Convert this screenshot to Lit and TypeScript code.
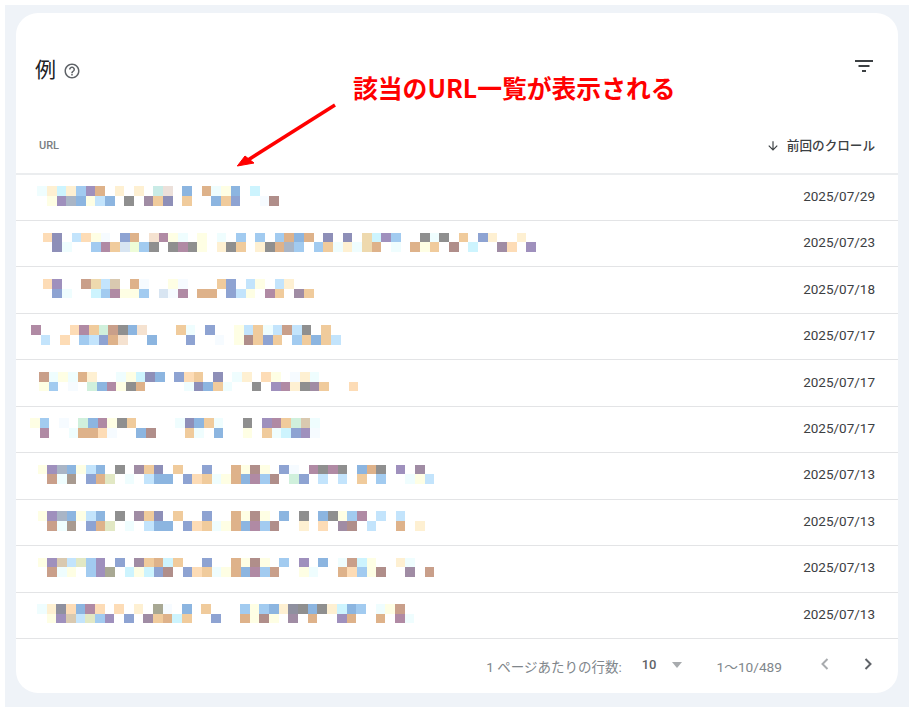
import { LitElement, html, css, svg } from "lit";
import { customElement } from "lit/decorators.js";

const PALETTE: Record<string, string> = {
  c: "#effdfe", C: "#cdf4fe", S: "#c3e4fc", k: "#fef0d2", P: "#fddcb6", p: "#f5e2d0",
  y: "#fefee4", f: "#f6fbff", b: "#a2cbf0", B: "#8cb5e0", n: "#8ea3d2", i: "#8e8fb8",
  v: "#9f90bd", m: "#b08aa4", M: "#a08ca4", r: "#b08e8a", R: "#c99f8a", t: "#deb28a",
  o: "#f0cb9c", g: "#8f8f8f", G: "#8f909f", q: "#a9b5c6", w: "#c9ebe6", x: "#ece0da",
  e: "#d0f0dc", E: "#eefcd8", l: "#e2e8c4", u: "#d9c9b0", h: "#eed9ae", d: "#d8e5f2",
  W: "#a89a90", Z: "#a8a893",
};

interface Row { x: number; top: string; bot: string; date: string }

const ROWS: Row[] = [
  { x: 21.3, date: "2025/07/29", top: "ckCkbvt.k.k.wx.B.tcyB.C", bot: ".yvqBySB.g.Moi.o..Bon..fr" },
  { x: 26.7, date: "2025/07/23", top: "Pi.SPyf.nt.pmyc.y.c.b.b.btBt.i.i.hCvb..gcg.o.nk..k", bot: ".ic..bmodEbg.gmgy.kgo.kgtqb.bockcht.c.tyo.r.C..MP.v" },
  { x: 26.7, date: "2025/07/18", top: "Pv..RhSu.tf..yf...on.Sy.Sk", bot: ".nc..Cbmyyb.dfm.tt.nSy.mo.Mo" },
  { x: 15, date: "2025/07/17", top: "m...PmoeRgBp...oc.n..ySocSRSg.o", bot: ".S.P.bSntp..B...n..f.yrono.boBoS" },
  { x: 23, date: "2025/07/17", top: "Rcyctk..cyCiB.nPo.i.ck.Py.fkc", bot: "yb.f.eBmygt....ciBoc..g.vmkgMo..P" },
  { x: 14, date: "2025/07/17", top: "yb.f.eBmygo....ciBoc..g.vmoeuc", bot: ".m..cttPf..Br...oc.B..y.ocCnvf" },
  { x: 21.7, date: "2025/07/13", top: "yvqBySB.g.Moi.o..n..tyry.nf.mgmg.Btg.v.M", bot: ".RcW.ntl.c.SBB.nPocytBmbr.en.S.S.o.b..cyS" },
  { x: 21.7, date: "2025/07/13", top: "yvqBySB.g.Moi.o..n..tyry.B.g.Bgybm.S.S", bot: ".RcW.ntl.c.SBB.nPocytBmbr..k.P.Mr.S..t.k" },
  { x: 21.7, date: "2025/07/13", top: "yvuSlbv.n.MotCo..n..tyry.b.v.B.cRCy..kc", bot: ".Rcy.bvZ.CyCnr.nPocytBmbR..yc..tPbyr..M.R" },
  { x: 21, date: "2025/07/13", top: "ckGPBmP.P.k.Zf.B.o...bybBkGgBgkCBb.cyR", bot: ".yvuSlbv.n.MotCo..n..tyry.M.t..vt..t.mc" },
];

const line = (s: string) => html`<div class="line">${[...s].map((ch) =>
  html`<span class="cell" style=${PALETTE[ch] ? `background:${PALETTE[ch]}` : ""}></span>`)}</div>`;

@customElement("app-root")
export class AppRoot extends LitElement {
  static styles = css`
    :host {
      display: block;
      width: 915px;
      height: 713px;
      box-sizing: border-box;
      padding: 5px 6px 6px 5px;
      background: #fff;
      font-family: Roboto, "Noto Sans CJK JP", sans-serif;
    }
    .frame {
      height: 100%;
      box-sizing: border-box;
      padding: 8px 11px 14px 11px;
      background: #eff3f8;
    }
    .card {
      position: relative;
      height: 100%;
      background: #fff;
      border-radius: 22px;
      display: flex;
      flex-direction: column;
      overflow: hidden;
    }
    .title-row {
      height: 112px;
      flex: none;
      box-sizing: border-box;
      padding: 41px 25px 0 19px;
      display: flex;
      align-items: flex-start;
      justify-content: space-between;
    }
    .title {
      display: flex;
      align-items: center;
      gap: 7px;
      font: 400 21px/28px "Noto Sans CJK JP", sans-serif;
      color: #202124;
    }
    .help { display: block; width: 18px; height: 18px; margin-top: 5px; }
    .filter { display: block; width: 18px; height: 14px; margin-top: 5px; }
    .head {
      height: 49.6px;
      flex: none;
      box-sizing: border-box;
      padding: 0 23px 6px 23px;
      display: flex;
      align-items: center;
      justify-content: space-between;
      border-bottom: 2px solid #ebedef;
    }
    .head-url { font: 500 11px/16px Roboto, sans-serif; color: #7a7d81; }
    .head-sort {
      display: flex;
      align-items: center;
      gap: 7px;
      font: 500 12.6px/16px Roboto, "Noto Sans CJK JP", sans-serif;
      color: #3c4043;
    }
    .head-sort svg { display: block; width: 14px; height: 14px; }
    .rows { flex: none; }
    .row {
      height: 46.45px;
      box-sizing: border-box;
      border-bottom: 1px solid #e3e4e6;
      padding: 0 23px 3px 0;
      display: flex;
      align-items: center;
      justify-content: space-between;
    }
    .mosaic { filter: blur(0.35px); }
    .line { display: flex; height: 9.7px; }
    .cell { flex: none; width: 9.68px; height: 9.7px; }
    .date { font: 400 13.5px/20px Roboto, sans-serif; color: #3c4043; }
    .foot {
      flex: 1;
      display: flex;
      align-items: center;
      justify-content: flex-end;
      padding: 3px 22px 0 0;
      font: 400 13.5px/18px Roboto, "Noto Sans CJK JP", sans-serif;
      color: #80868b;
    }
    .per { margin-right: 20px; }
    .size { font: 500 13px/18px Roboto, sans-serif; color: #5f6368; margin-right: 15px; margin-top: -4px; }
    .caret {
      width: 0; height: 0;
      border-left: 5.5px solid transparent;
      border-right: 5.5px solid transparent;
      border-top: 6px solid #a8abae;
      margin-right: 35px;
      margin-top: -4px;
    }
    .range { margin-right: 35px; font-size: 13.7px; }
    .nav { display: block; width: 16px; height: 16px; margin-top: -6px; }
    .nav.prev { margin-right: 27px; }
    .note {
      position: absolute;
      left: 337px;
      top: 57px;
      font: 700 24.8px/34px "Noto Sans CJK JP", sans-serif;
      color: #ff0000;
      white-space: nowrap;
    }
    .arrow {
      position: absolute;
      left: 215px;
      top: 85px;
      width: 110px;
      height: 75px;
    }
  `;

  render() {
    return html`
      <div class="frame">
        <div class="card">
          <div class="title-row">
            <div class="title">
              <span>例</span>
              <svg class="help" viewBox="0 0 24 24" fill="#5f6368"><path d="M11 18h2v-2h-2v2zm1-16C6.48 2 2 6.48 2 12s4.48 10 10 10 10-4.48 10-10S17.52 2 12 2zm0 18c-4.41 0-8-3.59-8-8s3.59-8 8-8 8 3.59 8 8-3.59 8-8 8zm0-14c-2.21 0-4 1.79-4 4h2c0-1.1.9-2 2-2s2 .9 2 2c0 2-3 1.75-3 5h2c0-2.25 3-2.5 3-5 0-2.21-1.79-4-4-4z"/></svg>
            </div>
            <svg class="filter" viewBox="0 0 18 14" fill="#3c4043"><rect x="0" y="1" width="18" height="2"/><rect x="3.5" y="6" width="11" height="2"/><rect x="7" y="11" width="4" height="2"/></svg>
          </div>
          <div class="head">
            <span class="head-url">URL</span>
            <span class="head-sort">
              <svg viewBox="0 0 24 24" fill="#3c4043"><path d="M20 12l-1.41-1.41L13 16.17V4h-2v12.17l-5.58-5.59L4 12l8 8 8-8z"/></svg>
              前回のクロール
            </span>
          </div>
          <div class="rows">
            ${ROWS.map((r) => html`
              <div class="row">
                <div class="mosaic" style="margin-left:${r.x}px">${line(r.top)}${line(r.bot)}</div>
                <span class="date">${r.date}</span>
              </div>`)}
          </div>
          <div class="foot">
            <span class="per">1 ページあたりの行数:</span>
            <span class="size">10</span>
            <span class="caret"></span>
            <span class="range">1〜10/489</span>
            <svg class="nav prev" viewBox="0 0 16 16" fill="none" stroke="#a8abae" stroke-width="2"><path d="M10.5 3 5.5 8l5 5"/></svg>
            <svg class="nav" viewBox="0 0 16 16" fill="none" stroke="#5f6368" stroke-width="2"><path d="M5.5 3l5 5-5 5"/></svg>
          </div>
          <div class="note">該当のURL一覧が表示される</div>
          <svg class="arrow" viewBox="0 0 110 75">
            ${svg`<path d="M104 7 L17 62" stroke="#ff0000" stroke-width="3.6" fill="none"/><path d="M6.3 68 L14 58 L23 65 Z" fill="#ff0000" stroke="#ff0000" stroke-width="1" stroke-linejoin="round"/>`}
          </svg>
        </div>
      </div>
    `;
  }
}
